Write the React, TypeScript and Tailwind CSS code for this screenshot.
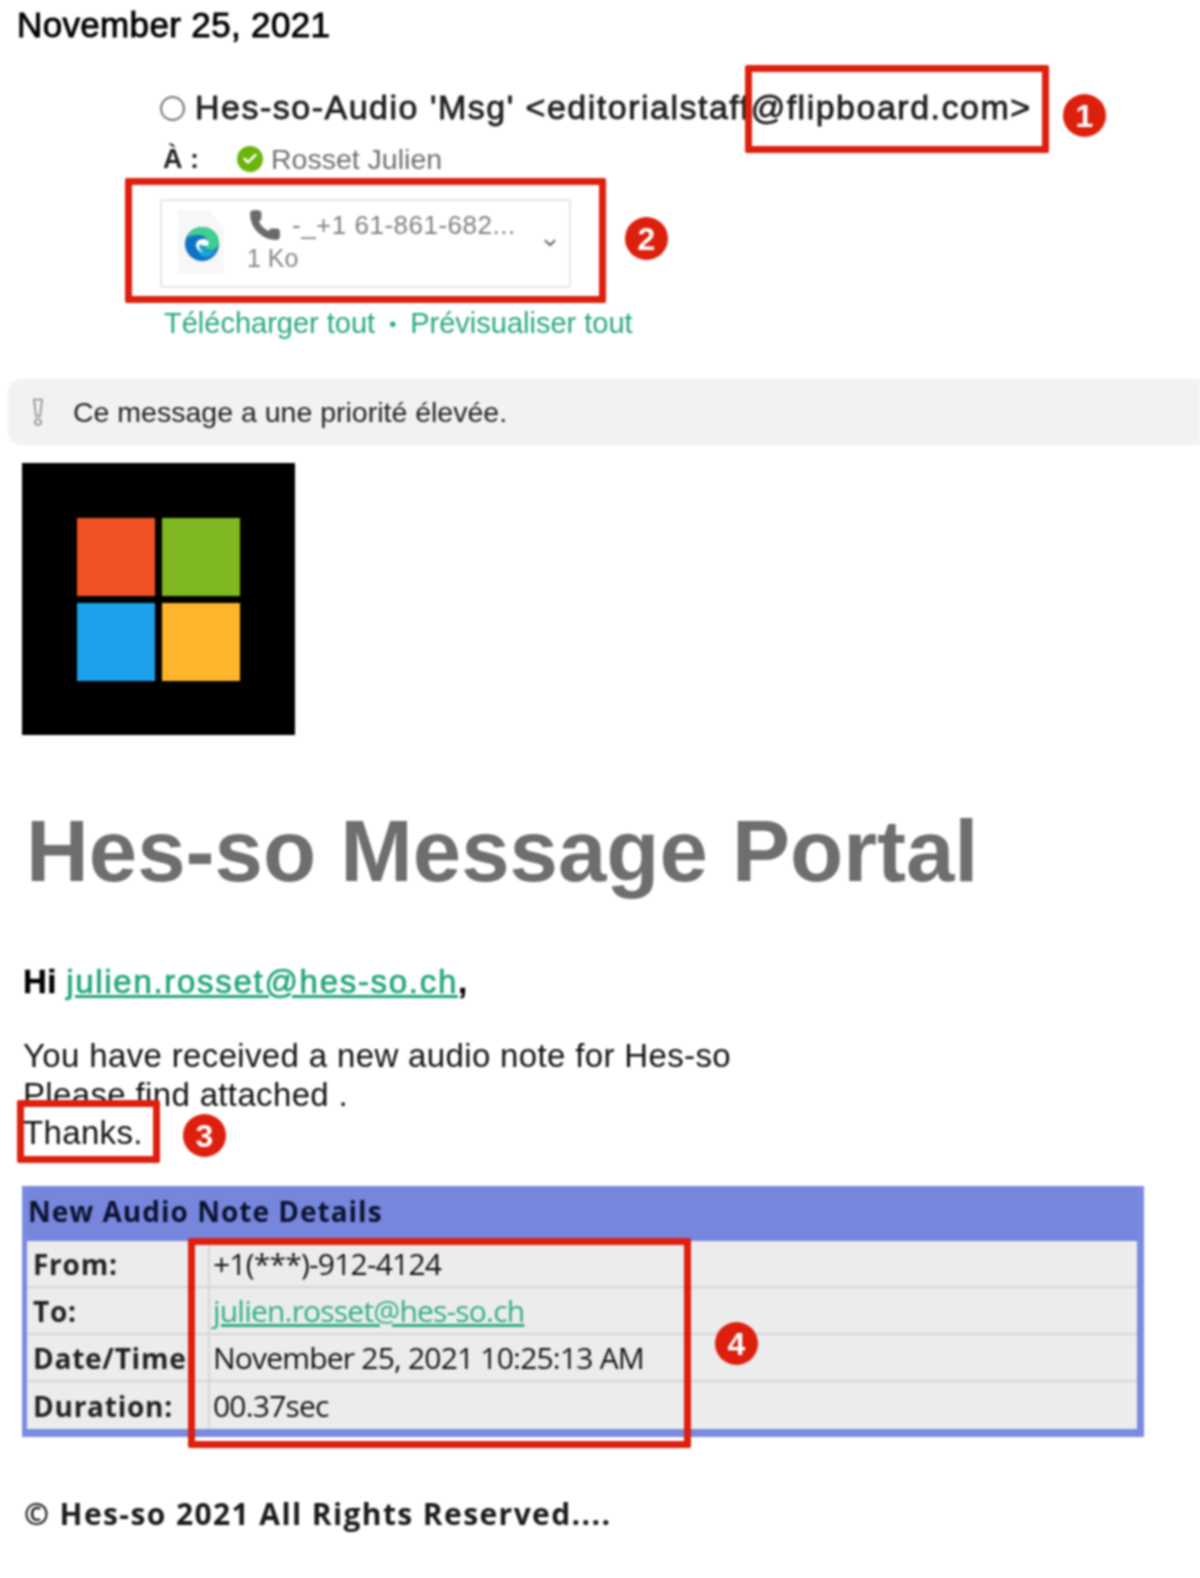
import { Phone, ChevronDown, Check } from "lucide-react";

const SANS = "font-['Liberation_Sans',Arial,sans-serif]";
const OPEN = "font-['Open_Sans',sans-serif]";

const ROWS = [
  { label: "From:", value: "+1(***)-912-4124" },
  { label: "To:", value: "julien.rosset@hes-so.ch", link: true },
  { label: "Date/Time:", value: "November 25, 2021 10:25:13 AM" },
  { label: "Duration:", value: "00.37sec" },
];

function EdgeLogo() {
  return (
    <svg width="36" height="36" viewBox="0 0 36 36" className="absolute left-[22px] top-[25px]">
      <circle cx="18" cy="18" r="17" fill="#0f72c4" />
      <path d="M3 12C6 4 13 1 19 1c9 0 16 7 16 15 0 5-4 8-9 8-3 0-5-1-6-2 3-1 4-3 4-5 0-4-4-8-9-8-5 0-10 1-12 3z" fill="#3fcf8e" />
      <path d="M14 20c0-4 3-7 6-7s6 2 6 4-2 3-4 3h-3c0 3 3 5 7 5 2 0 5-1 6-2-2 5-7 9-12 8-4-1-7-5-6-11z" fill="#1aa5d8" />
      <path d="M12 19c0-4 4-6 7-6 3 0 6 2 6 4 0 1-1 3-3 3h-3c-1-2-3-2-4 0 0 3 2 5 5 6-5 0-8-3-8-7z" fill="#fff" />
    </svg>
  );
}

function AttachmentCard() {
  return (
    <div className="relative ml-[160px] h-[89px] w-[411px] rounded-[3px] border-2 border-[#e6e6e6] bg-white">
      <div className="absolute left-[16px] top-[9px] h-[64px] w-[46px] bg-[#f7f7f7] [clip-path:polygon(0_0,68%_0,100%_28%,100%_100%,0_100%)]" />
      <EdgeLogo />
      <Phone size={34} fill="#6a6a6a" stroke="#6a6a6a" strokeWidth={1} className="absolute left-[86px] top-[7px]" />
      <span className="absolute left-[130px] top-[9px] text-[26px] leading-[30px] tracking-[0.5px] text-[#808080]">-_+1 61-861-682...</span>
      <span className="absolute left-[85px] top-[42px] text-[25px] leading-[30px] text-[#858585]">1 Ko</span>
      <ChevronDown size={18} strokeWidth={3} className="absolute left-[379px] top-[33px] text-[#6f6f6f]" />
    </div>
  );
}

function DetailsTable() {
  return (
    <div className={`mx-[22px] h-[251px] w-[1122px] border-b-[8px] border-l-[5px] border-r-[7px] border-[#7a8ae0] bg-[#7686dc] ${OPEN}`}>
      <div className="flex h-[55px] items-center pb-[5px] pl-px text-[28px] font-bold tracking-[1px] text-[#0c1230]">
        New Audio Note Details
      </div>
      {ROWS.map((row, i) => (
        <div
          key={row.label}
          className={`grid h-[47px] grid-cols-[183px_1fr] bg-[#ececec] ${i < 3 ? "border-b-2 border-[#d5d5d5]" : ""}`}
        >
          <div className="flex items-center overflow-hidden whitespace-nowrap border-r-2 border-[#d5d5d5] pl-[6px] text-[28px] font-bold tracking-[0.75px] text-[#222]">
            {row.label}
          </div>
          <div className="flex items-center pl-[3px] text-[30px] tracking-[-0.8px] text-[#111]">
            {row.link ? <span className="text-[#2fae84] underline">{row.value}</span> : row.value}
          </div>
        </div>
      ))}
    </div>
  );
}

// red annotation badges, sitting over the screenshot
function Badge({ n, className }: { n: number; className: string }) {
  return (
    <div className={`absolute flex h-[43px] w-[43px] items-center justify-center rounded-full bg-[#dd1f0e] text-[32px] font-bold text-white ${className}`}>
      {n}
    </div>
  );
}

export default function App() {
  return (
    <div className={`relative h-[1578px] w-[1200px] overflow-hidden bg-white blur-[0.8px] ${SANS}`}>
      <div className="flex h-[50px] items-center pl-[17px] text-[35px] tracking-[0.35px] text-black [-webkit-text-stroke:0.9px_black]">
        November 25, 2021
      </div>

      <div className="mt-[37px] flex h-[40px] items-center whitespace-nowrap pl-[160px]">
        <span className="mt-[2px] h-[25px] w-[25px] shrink-0 rounded-full border-2 border-[#777]" />
        <span className="ml-[10px] text-[34px] tracking-[1.5px] text-[#1f1f1f] [-webkit-text-stroke:0.8px_#1f1f1f]">
          Hes-so-Audio 'Msg' &lt;editorialstaff@flipboard.com&gt;
        </span>
      </div>

      <div className="mt-[13px] flex h-[38px] items-center pl-[163px]">
        <span className="w-[74px] text-[27px] font-bold text-[#222]">À :</span>
        <span className="flex h-[26px] w-[26px] items-center justify-center rounded-full bg-[#6cb30e]">
          <Check size={16} strokeWidth={4} className="text-white" />
        </span>
        <span className="ml-[8px] text-[28.5px] text-[#6f6f6f]">Rosset Julien</span>
      </div>

      <div className="mt-[21px]">
        <AttachmentCard />
      </div>

      <div className="mt-[16px] flex h-[40px] items-center pl-[164px] text-[29px] text-[#27a87c]">
        <span>Télécharger tout</span>
        <span className="mx-[14px] text-[20px]">•</span>
        <span>Prévisualiser tout</span>
      </div>

      <div className="ml-[8px] mt-[35px] flex h-[66px] items-center rounded-l-[14px] bg-[#f3f2f1] pl-[22px]">
        <svg width="16" height="30" viewBox="0 0 16 30" fill="none" stroke="#8a8a8a" strokeWidth="1.6">
          <path d="M4 2.5h8L10 19H6z" />
          <circle cx="8" cy="25" r="3" />
        </svg>
        <span className="ml-[27px] pt-[1px] text-[28.5px] text-[#222]">Ce message a une priorité élevée.</span>
      </div>

      <div className="ml-[22px] mt-[18px] h-[272px] w-[273px] bg-black pl-[55px] pt-[55px]">
        <div className="grid w-[163px] grid-cols-[78px_78px] gap-[7px]">
          <div className="h-[78px] bg-[#f25326]" />
          <div className="h-[78px] bg-[#80b821]" />
          <div className="h-[78px] bg-[#1da1ec]" />
          <div className="h-[78px] bg-[#ffb52b]" />
        </div>
      </div>

      <h1 className="mt-[66px] flex h-[100px] items-center pl-[26px] text-[87px] font-bold text-[#6e6e6e]">
        Hes-so Message Portal
      </h1>

      <div className="ml-[23px] mt-[62px] text-[33px] leading-[38px] tracking-[0.35px] text-[#111]">
        <p className="text-black [-webkit-text-stroke:0.4px_black]">
          <span className="font-bold">Hi </span>
          <span className="tracking-[1.7px] text-[#22a67a] underline [-webkit-text-stroke:0.7px_#22a67a]">julien.rosset@hes-so.ch</span>
          <span className="font-bold">,</span>
        </p>
        <p className="mt-[36px]">You have received a new audio note for Hes-so</p>
        <p className="mt-px">Please find attached .</p>
        <p>Thanks.</p>
      </div>

      <div className="mt-[34px]">
        <DetailsTable />
      </div>

      <div className={`mt-[56px] flex h-[40px] items-center pl-[24px] text-[30px] font-bold tracking-[1.4px] text-[#1a1a1a] ${OPEN}`}>
        © Hes-so 2021 All Rights Reserved....
      </div>

      {/* annotations drawn over the mail */}
      <div className="absolute left-[745px] top-[65px] h-[88px] w-[304px] rounded-[2px] border-[7px] border-[#dd1f0e]" />
      <div className="absolute left-[125px] top-[178px] h-[125px] w-[481px] rounded-[2px] border-[7px] border-[#dd1f0e]" />
      <div className="absolute left-[17px] top-[1100px] h-[63px] w-[143px] rounded-[2px] border-[7px] border-[#dd1f0e]" />
      <div className="absolute left-[188px] top-[1238px] h-[210px] w-[503px] rounded-[2px] border-[7px] border-[#dd1f0e]" />
      <Badge n={1} className="left-[1063px] top-[94px]" />
      <Badge n={2} className="left-[625px] top-[217px]" />
      <Badge n={3} className="left-[183px] top-[1114px]" />
      <Badge n={4} className="left-[715px] top-[1322px]" />
    </div>
  );
}
